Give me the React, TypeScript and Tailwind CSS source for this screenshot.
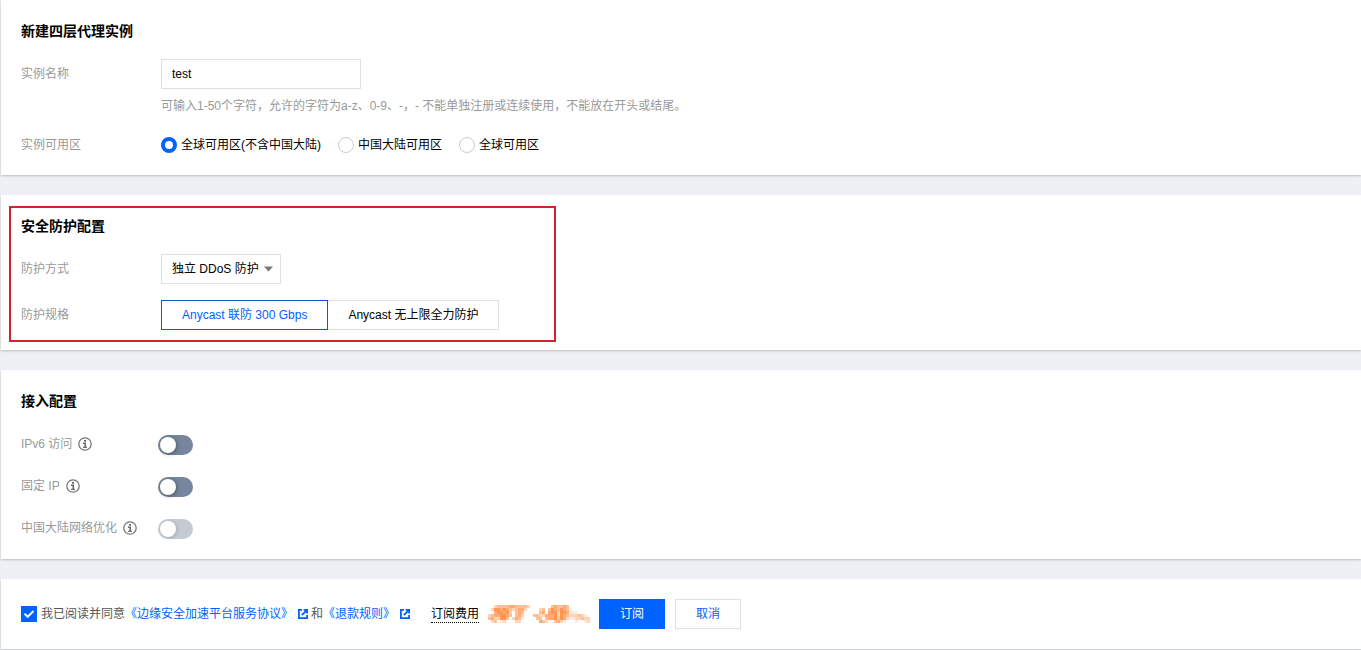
import { useState, type ReactNode } from "react";
import clsx from "clsx";

const zones = ["全球可用区(不含中国大陆)", "中国大陆可用区", "全球可用区"];
const specs = ["Anycast 联防 300 Gbps", "Anycast 无上限全力防护"];

// masked price, one digit per block, 0 = empty, 5 = darkest
const priceMask = [
  "0023333443333200000003433430000000",
  "0255454323442000023035435431000000",
  "0045545203430000034045525541110000",
  "2344554303420003322444525432223210",
  "3422553024310000330344535421122322",
  "0230120002200000043200342100010012",
];

function Card({ title, children }: { title?: string; children: ReactNode }) {
  return (
    <section className="relative bg-white p-5 shadow-[0_1px_2px_rgba(0,0,0,0.22)]">
      {title && (
        <h2 className="mb-[17px] text-sm leading-[22px] font-bold text-black">
          {title}
        </h2>
      )}
      {children}
    </section>
  );
}

function InfoIcon() {
  return (
    <svg className="size-[14px] shrink-0" viewBox="0 0 14 14" fill="none">
      <circle cx="7" cy="7" r="6.2" stroke="#777" strokeWidth="1.3" />
      <rect x="6" y="3" width="2" height="1.7" fill="#666" />
      <path d="M5 6.2h2.2v4" stroke="#666" strokeWidth="1.5" />
      <path d="M5 10.3h4" stroke="#666" strokeWidth="1.2" />
    </svg>
  );
}

function ExternalIcon() {
  return (
    <svg className="size-[10px] shrink-0" viewBox="0 0 10 10" fill="none">
      <path
        d="M4 .9H.9v8.2h8.2V6"
        stroke="currentColor"
        strokeWidth="1.8"
      />
      <path
        d="M5.6.9h3.5v3.5M9 1 3.8 6.2"
        stroke="currentColor"
        strokeWidth="1.8"
      />
    </svg>
  );
}

function MaskedPrice() {
  return (
    <svg className="ml-[9px] h-[18px] w-[102px] shrink-0" viewBox="0 0 102 18">
      {priceMask.flatMap((row, y) =>
        [...row].map((level, x) => (
          <rect
            key={`${x}-${y}`}
            x={x * 3}
            y={y * 3}
            width="3"
            height="3"
            fill="#ff8b3d"
            opacity={Number(level) * 0.18}
          />
        )),
      )}
    </svg>
  );
}

function ToggleRow({
  id,
  label,
  disabled,
}: {
  id: string;
  label: string;
  disabled?: boolean;
}) {
  return (
    <div className="flex h-5 items-center">
      <div className="flex w-[137px] shrink-0 items-center gap-[6px] pb-[2px] text-[#999]">
        <label htmlFor={id}>{label}</label>
        <InfoIcon />
      </div>
      <input
        id={id}
        type="checkbox"
        role="switch"
        disabled={disabled}
        className="h-5 w-[35px] appearance-none rounded-full bg-[#77869c] before:m-[2px] before:block before:size-4 before:rounded-full before:bg-white before:shadow-[1px_1px_4px_rgba(0,0,0,0.35)] checked:bg-[#0062ff] checked:before:ml-[17px] disabled:bg-[#c5cad3] disabled:before:shadow-[1px_1px_4px_rgba(0,0,0,0.15)]"
      />
    </div>
  );
}

export default function App() {
  const [zone, setZone] = useState(zones[0]);
  const [spec, setSpec] = useState(specs[0]);

  return (
    <main className="flex min-h-screen flex-col gap-5 bg-[#eff0f5] pl-px font-['Liberation_Sans','Noto_Sans_CJK_SC',sans-serif] text-xs leading-5 text-black">
      <Card title="新建四层代理实例">
        <div className="flex">
          <label
            htmlFor="name"
            className="w-[140px] shrink-0 leading-[30px] text-[#999]"
          >
            实例名称
          </label>
          <div>
            <input
              id="name"
              defaultValue="test"
              className="block h-[30px] w-[200px] border border-[#e0e0e0] bg-white px-[10px] outline-none"
            />
            <p className="mt-[7px] text-[#999]">
              可输入1-50个字符，允许的字符为a-z、0-9、-，- 不能单独注册或连续使用，不能放在开头或结尾。
            </p>
          </div>
        </div>
        <fieldset className="mt-[19px] flex">
          <legend className="float-left w-[140px] shrink-0 text-[#999]">
            实例可用区
          </legend>
          <div className="flex gap-[17px]">
            {zones.map((item) => (
              <label key={item} className="flex items-center gap-1">
                <input
                  type="radio"
                  name="zone"
                  checked={zone === item}
                  onChange={() => setZone(item)}
                  className="size-4 appearance-none rounded-full border border-[#c8cbd2] bg-white checked:border-4 checked:border-[#0062ff]"
                />
                {item}
              </label>
            ))}
          </div>
        </fieldset>
      </Card>

      <Card title="安全防护配置">
        <div className="flex items-center">
          <label htmlFor="mode" className="w-[140px] shrink-0 text-[#999]">
            防护方式
          </label>
          <div className="relative">
            <select
              id="mode"
              className="block h-[30px] w-[120px] appearance-none border border-[#e0e0e0] bg-white px-[10px] outline-none"
            >
              <option>独立 DDoS 防护</option>
            </select>
            <svg
              className="pointer-events-none absolute top-3 right-2 h-[6px] w-[9px]"
              viewBox="0 0 9 6"
            >
              <path d="M0 .5h9L4.5 5.5z" fill="#777" />
            </svg>
          </div>
        </div>
        <div className="mt-4 flex items-center">
          <span className="w-[140px] shrink-0 text-[#999]">防护规格</span>
          <div className="flex">
            {specs.map((item) => (
              <button
                key={item}
                type="button"
                onClick={() => setSpec(item)}
                className={clsx(
                  "-ml-px h-[30px] border px-5 first:ml-0",
                  spec === item
                    ? "relative border-[#0a5ad6] text-[#0062ff]"
                    : "border-[#e0e0e0]",
                )}
              >
                {item}
              </button>
            ))}
          </div>
        </div>
        <div className="pointer-events-none absolute top-[11px] bottom-2 left-2 w-[547px] border-2 border-[#d2232e]" />
      </Card>

      <Card title="接入配置">
        <div className="flex flex-col gap-[22px] pt-[6px]">
          <ToggleRow id="ipv6" label="IPv6 访问" />
          <ToggleRow id="static-ip" label="固定 IP" />
          <ToggleRow id="cn-network" label="中国大陆网络优化" disabled />
        </div>
      </Card>

      <Card>
        <div className="flex items-center">
          <label className="flex items-center gap-1 text-[#555]">
            <span className="relative block size-4">
              <input
                type="checkbox"
                defaultChecked
                className="peer block size-4 appearance-none border border-[#c8cbd2] checked:border-[#0062ff] checked:bg-[#0062ff]"
              />
              <svg
                className="pointer-events-none absolute inset-0 hidden size-4 peer-checked:block"
                viewBox="0 0 16 16"
                fill="none"
              >
                <path d="m3.5 7.6 3.2 3.2 5.8-5.8" stroke="#fff" strokeWidth="2" />
              </svg>
            </span>
            我已阅读并同意
          </label>
          <a href="#terms" className="flex items-center gap-[5px] text-[#0062ff]">
            《边缘安全加速平台服务协议》
            <ExternalIcon />
          </a>
          <span className="ml-[3px] text-[#555]">和</span>
          <a href="#refund" className="flex items-center gap-[5px] text-[#0062ff]">
            《退款规则》
            <ExternalIcon />
          </a>
          <span className="ml-[21px] border-b border-dotted border-black leading-4">
            订阅费用
          </span>
          <MaskedPrice />
          <button
            type="button"
            className="ml-[9px] h-[30px] w-[66px] bg-[#0062ff] text-white"
          >
            订阅
          </button>
          <button
            type="button"
            className="ml-[10px] h-[30px] w-[66px] border border-[#e0e0e0] text-[#0062ff]"
          >
            取消
          </button>
        </div>
      </Card>
    </main>
  );
}
